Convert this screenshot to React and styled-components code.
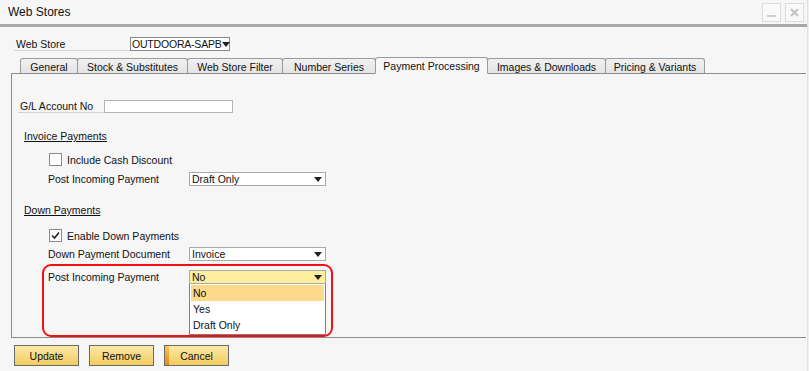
import React from "react"
import styled, { createGlobalStyle } from "styled-components"

const GlobalStyle = createGlobalStyle`
    html, body {
        margin: 0;
        padding: 0;
        background: #f0f0f0;
    }
    body {
        font-family: "Liberation Sans", Arial, sans-serif;
        font-size: 10.5px;
        color: #111;
    }
`

const Window = styled.div`
    width: 807px;
    height: 371px;
    background: #f6f6f6;
    border-right: 1px solid #e2e2e2;
    display: flex;
    flex-direction: column;
    overflow: hidden;
`
const TitleBar = styled.div`
    height: 24px;
    display: flex;
    align-items: center;
    padding: 0 3px 0 8px;
`
const Title = styled.span`
    font-size: 12px;
    margin-right: auto;
    color: #111;
`
const WinButton = styled.span`
    width: 17px;
    height: 17px;
    border: 1px solid #dcdcdc;
    margin-left: 4px;
    display: flex;
    align-items: center;
    justify-content: center;
    background: #f9f9f9;
`
const Separator = styled.div`
    height: 3px;
    background: #a8a8a8;
`
const WebStoreRow = styled.div`
    display: flex;
    align-items: flex-end;
    margin: 10px 0 0 14px;
`
const FieldLabel = styled.span`
    display: flex;
    align-items: center;
    width: ${p => p.width}px;
    height: 14px;
    padding-left: 2px;
    box-sizing: border-box;
    border-bottom: 1px solid #d4d4d4;
`
const TabRow = styled.div`
    display: flex;
    align-items: flex-end;
    margin: 6px 0 0 20px;
    position: relative;
    z-index: 1;
`
const Tab = styled.div`
    width: ${p => p.width}px;
    height: ${p => (p.active ? 17 : 15)}px;
    box-sizing: border-box;
    margin-right: -1px;
    border: 1px solid #9a9a9a;
    border-bottom: ${p => (p.active ? "1px solid #f6f6f6" : "none")};
    border-radius: 3px 3px 0 0;
    margin-bottom: ${p => (p.active ? -1 : 0)}px;
    background: ${p => (p.active ? "#f6f6f6" : "linear-gradient(#f1f1f1, #e4e4e4)")};
    display: flex;
    align-items: center;
    justify-content: center;
    padding-top: ${p => (p.active ? 0 : 1)}px;
`
const Panel = styled.div`
    margin-left: 11px;
    width: 795px;
    height: 265px;
    box-sizing: border-box;
    border-top: 1px solid #8c8c8c;
    border-left: 1px solid #8c8c8c;
    border-bottom: 1px solid #8c8c8c;
    padding-left: 6px;
    display: flex;
    flex-direction: column;
    align-items: flex-start;
`
const Row = styled.div`
    display: flex;
    align-items: center;
    height: 14px;
    margin-top: ${p => p.top}px;
    margin-left: ${p => p.indent || 0}px;
`
const Label = styled.span`
    width: ${p => p.width}px;
    flex-shrink: 0;
`
const Heading = styled.div`
    height: 14px;
    line-height: 14px;
    margin: ${p => p.top}px 0 0 6px;
    text-decoration: underline;
`
const TextInput = styled.div`
    width: 129px;
    height: 13px;
    box-sizing: border-box;
    border: 1px solid #b4b4b4;
    background: #fff;
`
const SelectBox = styled.div`
    width: ${p => p.width}px;
    height: 14px;
    box-sizing: border-box;
    border: 1px solid ${p => (p.compact ? "#8a8a8a" : "#a9a9a9")};
    background: ${p => (p.active ? "#fdef9f" : "#fff")};
    display: flex;
    align-items: center;
    padding: 0 3px 0 ${p => (p.compact ? 1 : 2)}px;
    white-space: nowrap;
`
const SelectText = styled.span`
    margin-right: auto;
    letter-spacing: ${p => (p.tight ? "-0.2px" : "0")};
`
const Arrow = styled.span`
    width: 0;
    height: 0;
    border-left: 4px solid transparent;
    border-right: 4px solid transparent;
    border-top: 5px solid #222;
`
const CheckBox = styled.span`
    width: 13px;
    height: 13px;
    box-sizing: border-box;
    border: 1px solid #8a8a8a;
    background: #fff;
    margin-right: 5px;
    display: flex;
    align-items: center;
    justify-content: center;
`
const Highlight = styled.div`
    margin: 3px 0 0 24px;
    width: 291px;
    box-sizing: border-box;
    border: 2px solid #ee1111;
    border-radius: 9px;
    padding: 2px 0 0 4px;
`
const DropdownWrap = styled.div`
    display: flex;
    flex-direction: column;
`
const DropList = styled.div`
    width: 137px;
    box-sizing: border-box;
    border: 1px solid #7f7f7f;
    border-top: none;
    background: #fff;
    padding: 1px;
    margin-left: 141px;
`
const DropItem = styled.div`
    height: 16px;
    display: flex;
    align-items: center;
    padding-left: 2px;
    background: ${p => (p.selected ? "#fcd98b" : "transparent")};
`
const ButtonRow = styled.div`
    display: flex;
    gap: 10px;
    margin: 7px 0 0 14px;
`
const Button = styled.div`
    width: 65px;
    height: 21px;
    box-sizing: border-box;
    border: 1px solid #6a6a6a;
    background: linear-gradient(#fbe9a9, #f1cc5e);
    display: flex;
    align-items: center;
    justify-content: center;
    position: relative;
    overflow: hidden;
`
const DefaultMark = styled.span`
    position: absolute;
    left: 0;
    top: 0;
    bottom: 0;
    width: 4px;
    background: linear-gradient(#f8c84a, #e88a12);
`

const tabs = [
    { name: "General", width: 58 },
    { name: "Stock & Substitutes", width: 111 },
    { name: "Web Store Filter", width: 96 },
    { name: "Number Series", width: 94 },
    { name: "Payment Processing", width: 113, active: true },
    { name: "Images & Downloads", width: 119 },
    { name: "Pricing & Variants", width: 100 },
]

function Check() {
    return (
        <svg width="9" height="9" viewBox="0 0 9 9">
            <path d="M1 4.5 L3.5 7 L8 1.5" fill="none" stroke="#222" strokeWidth="1.6" />
        </svg>
    )
}

export default function App() {
    return (
        <React.Fragment>
            <GlobalStyle />
            <Window>
                <TitleBar>
                    <Title>Web Stores</Title>
                    <WinButton>
                        <svg width="11" height="11" viewBox="0 0 11 11">
                            <rect x="1" y="8" width="9" height="2" fill="#cfcfcf" />
                        </svg>
                    </WinButton>
                    <WinButton>
                        <svg width="11" height="11" viewBox="0 0 11 11">
                            <path d="M2 2 L9 9 M9 2 L2 9" stroke="#c4c4c4" strokeWidth="2.2" />
                        </svg>
                    </WinButton>
                </TitleBar>
                <Separator />
                <WebStoreRow>
                    <FieldLabel width={116}>Web Store</FieldLabel>
                    <SelectBox width={100} compact>
                        <SelectText tight>OUTDOORA-SAPB</SelectText>
                        <Arrow />
                    </SelectBox>
                </WebStoreRow>
                <TabRow>
                    {tabs.map(t => (
                        <Tab key={t.name} width={t.width} active={t.active}>{t.name}</Tab>
                    ))}
                </TabRow>
                <Panel>
                    <Row top={25}>
                        <FieldLabel width={86}>G/L Account No</FieldLabel>
                        <TextInput />
                    </Row>
                    <Heading top={16}>Invoice Payments</Heading>
                    <Row top={10} indent={31}>
                        <CheckBox />
                        Include Cash Discount
                    </Row>
                    <Row top={6} indent={30}>
                        <Label width={141}>Post Incoming Payment</Label>
                        <SelectBox width={137}>
                            <SelectText>Draft Only</SelectText>
                            <Arrow />
                        </SelectBox>
                    </Row>
                    <Heading top={17}>Down Payments</Heading>
                    <Row top={12} indent={31}>
                        <CheckBox><Check /></CheckBox>
                        Enable Down Payments
                    </Row>
                    <Row top={5} indent={30}>
                        <Label width={141}>Down Payment Document</Label>
                        <SelectBox width={137}>
                            <SelectText>Invoice</SelectText>
                            <Arrow />
                        </SelectBox>
                    </Row>
                    <Highlight>
                        <DropdownWrap>
                            <Row top={2}>
                                <Label width={141}>Post Incoming Payment</Label>
                                <SelectBox width={137} active>
                                    <SelectText>No</SelectText>
                                    <Arrow />
                                </SelectBox>
                            </Row>
                            <DropList>
                                <DropItem selected>No</DropItem>
                                <DropItem>Yes</DropItem>
                                <DropItem>Draft Only</DropItem>
                            </DropList>
                        </DropdownWrap>
                    </Highlight>
                </Panel>
                <ButtonRow>
                    <Button>Update</Button>
                    <Button>Remove</Button>
                    <Button><DefaultMark />Cancel</Button>
                </ButtonRow>
            </Window>
        </React.Fragment>
    )
}
